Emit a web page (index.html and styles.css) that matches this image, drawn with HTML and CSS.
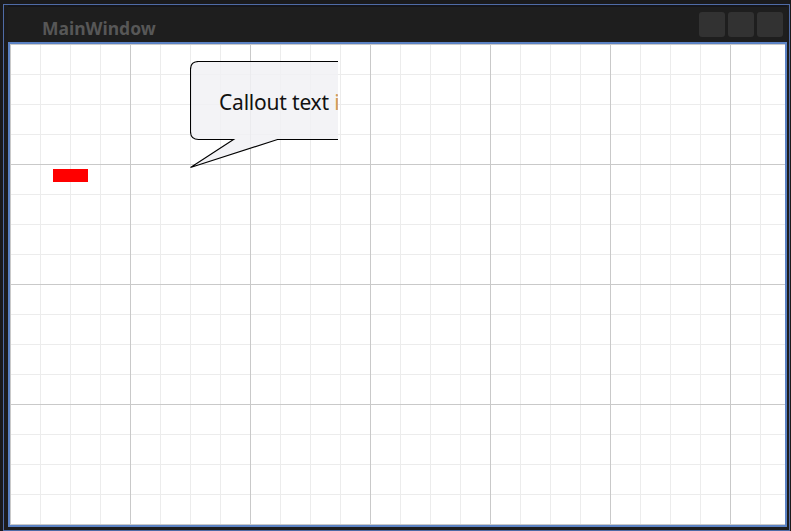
FILE: index.html
```html
<!DOCTYPE html>
<html>
<head>
<meta charset="utf-8">
<link rel="stylesheet" href="styles.css">
</head>
<body>
<div class="window">
  <div class="titlebar">
    <span class="title">MainWindow</span>
    <div class="buttons">
      <span class="btn"></span>
      <span class="btn"></span>
      <span class="btn"></span>
    </div>
  </div>
  <div class="client">
    <div class="red"></div>
    <div class="callout">
      <svg class="bubble" width="148" height="108" viewBox="0 0 148 108">
        <path d="M160 0.5 H8.5 Q0.5 0.5 0.5 8.5 V70.5 Q0.5 78.5 8.5 78.5 H43.5 L0.5 106.5 L87.5 78.5 H160" fill="rgba(241,241,245,0.85)" stroke="#000" stroke-width="1.1"/>
      </svg>
      <div class="callout-text">Callout text <span class="cut">i</span></div>
    </div>
  </div>
</div>
</body>
</html>
```
FILE: styles.css
```css
html, body {
  margin: 0;
  padding: 0;
}
body {
  width: 791px;
  height: 531px;
  overflow: hidden;
  background-color: #1a1a1c;
  padding-top: 4px;
  padding-left: 3px;
  box-sizing: border-box;
}
.window {
  width: 787px;
  height: 527px;
  box-sizing: border-box;
  border: 1px solid #4f6ba6;
  background-color: #1c1c1d;
  display: flex;
  flex-direction: column;
  padding: 0 2px 3px 4px;
}
.titlebar {
  height: 37px;
  display: flex;
  align-items: center;
  justify-content: space-between;
  padding-left: 34px;
  padding-right: 4px;
  background-color: #1e1e1e;
  box-shadow: inset 0 2px 0 #15161c;
}
.title {
  font-family: "Noto Sans", "Open Sans", sans-serif;
  font-weight: 700;
  font-size: 17.5px;
  color: #575757;
  margin-top: 9px;
}
.buttons {
  display: flex;
  gap: 3px;
  margin-top: 1px;
}
.btn {
  display: block;
  width: 26px;
  height: 25px;
  border-radius: 3px;
  background-color: #323232;
}
.client {
  flex: 1;
  position: relative;
  border: 2px solid #5b82c4;
  background-color: #ffffff;
  background-image:
    linear-gradient(to right, #c9c9c9 1px, transparent 1px),
    linear-gradient(to bottom, #c9c9c9 1px, transparent 1px),
    linear-gradient(to right, #ececec 1px, transparent 1px),
    linear-gradient(to bottom, #ececec 1px, transparent 1px);
  background-size: 120px 120px, 120px 120px, 30px 30px, 30px 30px;
  background-position: 0 0;
  overflow: hidden;
}
.red {
  position: absolute;
  left: 43px;
  top: 125px;
  width: 35px;
  height: 13px;
  background-color: #ff0000;
}
.callout {
  position: absolute;
  left: 180px;
  top: 17px;
  width: 148px;
  height: 108px;
  overflow: hidden;
}
.bubble {
  position: absolute;
  left: 0;
  top: 0;
  display: block;
}
.callout-text {
  position: absolute;
  left: 29px;
  top: 27px;
  white-space: nowrap;
  font-family: "Noto Sans", "Open Sans", sans-serif;
  font-size: 21px;
  letter-spacing: -0.2px;
  color: #111;
}
.cut {
  color: #cf9a55;
}
```
